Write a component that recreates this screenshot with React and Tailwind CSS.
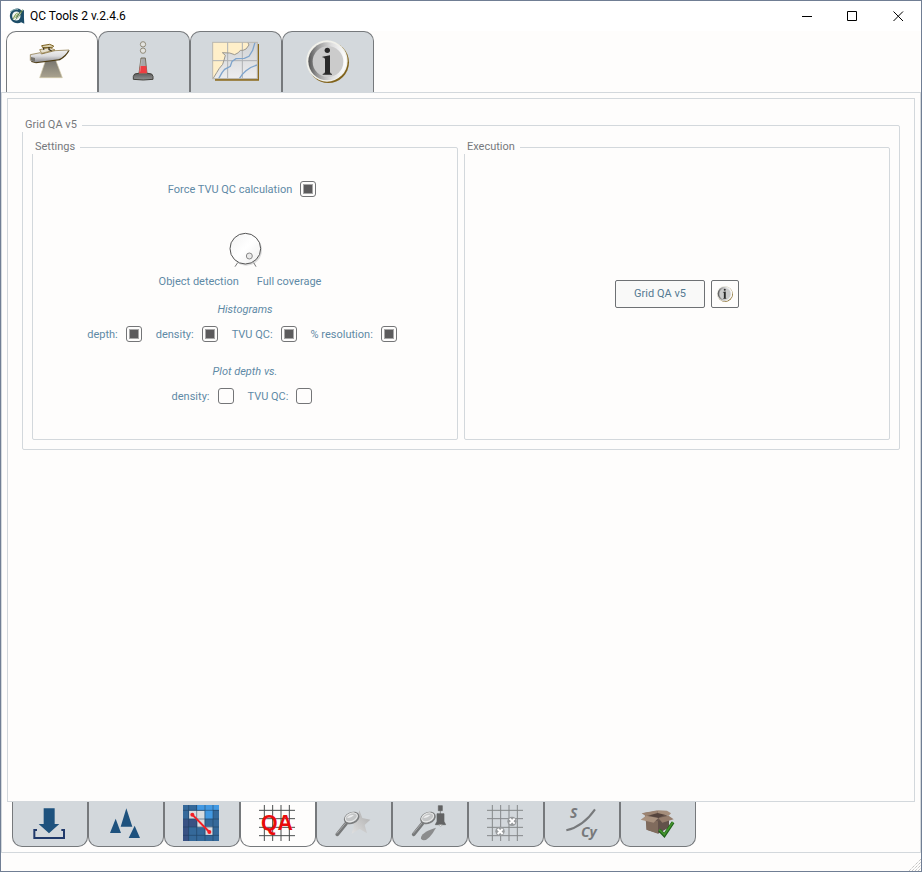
import React from "react";

function LogoIcon() {
  return (
    <svg viewBox="3 1 44 46" className="size-4" aria-hidden="true">
      <path d="M31 3A22 21 0 1 0 37 42L46 46L45 29V6L39 11Q36 5 31 3Z" fill="#1d4d68" />
      <ellipse cx="23" cy="24" rx="12" ry="13" fill="#f5f8f5" />
      <path d="M12 35Q16 19 27 14Q29 27 12 35Z" fill="#7e9b4d" />
      <path d="M20 37Q24 19 42 4Q40 20 20 37Z" fill="#4e7440" />
      <path d="M15 35L25 17M23 35L36 14" stroke="#fff" strokeWidth="2" />
      <path d="M6 12Q16 2 28 5" stroke="#83a9ad" strokeWidth="3" fill="none" />
    </svg>
  );
}

function BoatIcon() {
  return (
    <svg viewBox="84 114 144 144" className="size-12" aria-hidden="true">
      <defs>
        <linearGradient id="beam" x1="0" y1="0" x2="0" y2="1">
          <stop offset="0" stopColor="#77756e" />
          <stop offset="1" stopColor="#aaa38f" />
        </linearGradient>
        <linearGradient id="hull" x1="0" y1="0" x2="0" y2="1">
          <stop offset="0" stopColor="#f2f2f2" />
          <stop offset=".5" stopColor="#dcdcde" />
          <stop offset="1" stopColor="#88888c" />
        </linearGradient>
      </defs>
      <path d="M137 180H167L187 233H119Z" fill="url(#beam)" stroke="#d2c8a8" strokeWidth="2" />
      <path d="M93 167L122 162L209 151Q200 170 180 181L108 190L94 186Z" fill="#4d3c14" />
      <path d="M91 164L121 158L124 162L165 152L206 149Q196 168 176 178L106 187L92 182Z" fill="url(#hull)" />
      <path d="M91 182V164L121 158L124 162L165 152L207 150" stroke="#7d6630" strokeWidth="2" fill="none" />
      <path d="M119 149L149 143L165 150L125 160Z" fill="#e6e0cf" stroke="#7d6221" strokeWidth="2" />
      <path d="M125 137L149 133L161 138L158 142L128 143Z" fill="#dcd3b2" stroke="#7d6221" strokeWidth="3" />
      <path d="M131 143V149M147 141V149L155 153" stroke="#3e361f" strokeWidth="4" fill="none" />
      <path d="M93 171L105 174V185L93 181Z" fill="#77746d" />
    </svg>
  );
}

function BuoyIcon() {
  return (
    <svg viewBox="360 114 144 144" className="size-12" aria-hidden="true">
      <defs>
        <linearGradient id="buoy-base" x1="0" y1="0" x2="0" y2="1">
          <stop offset="0" stopColor="#555" />
          <stop offset="1" stopColor="#929292" />
        </linearGradient>
      </defs>
      <circle cx="429" cy="133" r="8" fill="#e3e3df" stroke="#918c7b" strokeWidth="3" />
      <circle cx="429" cy="152" r="8" fill="#e3e3df" stroke="#918c7b" strokeWidth="3" />
      <path d="M404 222Q429 213 455 222Q461 228 459 238Q430 242 400 238Q398 228 404 222Z" fill="url(#buoy-base)" stroke="#42413c" strokeWidth="3" />
      <path d="M423 174H436L441 220H417Z" fill="#a7a7a9" stroke="#77705f" strokeWidth="3" />
      <path d="M420 198H439L441 220H417Z" fill="#ee3d42" />
      <path d="M424 178L420 215" stroke="#ddd" strokeWidth="2" opacity=".6" />
    </svg>
  );
}

function ChartIcon() {
  return (
    <svg viewBox="66 114 144 144" className="size-12" aria-hidden="true">
      <defs>
        <linearGradient id="sea" x1="0" y1="0" x2="0" y2="1">
          <stop offset="0" stopColor="#d0d2d5" />
          <stop offset="1" stopColor="#ededee" />
        </linearGradient>
      </defs>
      <path d="M75 132H207V242H75Z" fill="#8d6b1c" />
      <path d="M68 126H202V236H68Z" fill="url(#sea)" />
      <path d="M68 126H175L177 135L168 147L159 151L151 151L145 158L134 164L119 159L101 159L99 158L106 166L103 177L98 193L88 205L80 218L69 236Z" fill="#ffefc9" />
      <path d="M113 126V236M157 126V236M68 182H202" stroke="#aeb0b3" strokeWidth="3" />
      <path d="M173 126L177 135L168 147L159 151L151 151L145 158L134 164L119 159L97 158L106 166L103 177L98 193L88 205L80 218L69 236" fill="none" stroke="#9c988e" strokeWidth="3" />
      <path d="M195 127L188 151L177 169L163 175L138 176L126 184L121 199L104 208L96 218L86 236M202 195Q180 201 168 212L157 223L148 236" fill="none" stroke="#7fa4cb" strokeWidth="4" />
      <rect x="68" y="127" width="134" height="109" fill="none" stroke="#b9b7b0" strokeWidth="3" />
    </svg>
  );
}

function InfoIcon({ id, className }) {
  return (
    <svg viewBox="342 114 144 144" className={className} aria-hidden="true">
      <defs>
        <linearGradient id={id} x1="0" y1="0" x2="1" y2="0">
          <stop offset="0" stopColor="#555" />
          <stop offset=".25" stopColor="#999" />
          <stop offset=".6" stopColor="#ddd" />
          <stop offset="1" stopColor="#fff" />
        </linearGradient>
      </defs>
      <circle cx="415" cy="187" r="62" fill="#80621a" />
      <circle cx="411" cy="183" r="62" fill="#f1f1eb" />
      <circle cx="412" cy="184" r="57" fill={`url(#${id})`} />
      <circle cx="414" cy="185" r="46" fill="#cbcbcb" />
      <circle cx="412" cy="151" r="8" fill="#292929" />
      <path d="M397 170L420 166V216Q420 220 426 222V224H398V222Q405 220 405 216V177Q404 172 397 172Z" fill="#292929" />
    </svg>
  );
}

function ImportIcon() {
  return (
    <svg viewBox="93 45 108 108" className="size-9" aria-hidden="true">
      <path d="M131 55H164V102H178L147 130L116 102H131Z" fill="#1e527e" />
      <path d="M111 120H103V144H192V120H184" fill="none" stroke="#20396a" strokeWidth="6" />
    </svg>
  );
}

function SpikesIcon() {
  return (
    <svg viewBox="321 45 108 108" className="size-9" aria-hidden="true">
      <path d="M379 55L397 110H362ZM347 86L363 129H330ZM404 107L420 144H386Z" fill="#1e527e" />
    </svg>
  );
}

function GridPathIcon() {
  return (
    <svg viewBox="549 45 108 108" className="size-9" aria-hidden="true">
      <path d="M549 45H657V153H549Z" fill="#35699a" />
      <path d="M591 45H657V60H639V86H614V60H591Z" fill="#4399e2" />
      <path d="M549 88H590V111H566V153H549Z" fill="#395183" />
      <path d="M567 62H614V110H638V135H616V112H592V86H567Z" fill="#d9dcdf" />
      <path d="M566 45V153M590 45V153M615 45V153M639 45V153M549 61H657M549 87H657M549 111H657M549 136H657" stroke="#1b3957" strokeWidth="2" opacity=".75" />
      <path d="M577 74L628 126" stroke="#f31f25" strokeWidth="6" />
      <circle cx="577" cy="74" r="6" fill="#f31f25" />
      <circle cx="628" cy="126" r="6" fill="#f31f25" />
    </svg>
  );
}

function QAIcon() {
  return (
    <svg viewBox="72 45 108 108" className="size-9 overflow-visible" aria-hidden="true">
      <path d="M88 45V153M113 45V153M138 45V153M163 45V153M72 61H180M72 86H180M72 112H180M72 137H180" stroke="#4a4e4e" strokeWidth="3" />
      <text x="126" y="121" textAnchor="middle" fontFamily="Liberation Sans, sans-serif" fontWeight="bold" fontSize="64" fill="#e90b0b">QA</text>
    </svg>
  );
}

function Magnifier({ x }) {
  return (
    <g transform={`translate(${x} 0)`}>
      <path d="M333 101L307 133" stroke="#77797a" strokeWidth="11" strokeLinecap="round" />
      <path d="M331 100L306 130" stroke="#a7a8a9" strokeWidth="3" strokeLinecap="round" />
      <ellipse cx="350" cy="84" rx="22" ry="15" transform="rotate(-24 350 84)" fill="#c3c5c6" stroke="#7b7d7e" strokeWidth="5" />
      <ellipse cx="349" cy="82" rx="19" ry="12" transform="rotate(-24 349 82)" fill="#c4c6c7" stroke="#e8e9e9" strokeWidth="3" />
      <path d="M336 84Q343 73 357 75Q349 84 336 84Z" fill="#edeeef" />
    </g>
  );
}

function FindStarIcon() {
  return (
    <svg viewBox="300 45 108 108" className="size-9" aria-hidden="true">
      <defs>
        <linearGradient id="star" x1="1" y1="0" x2="0" y2="1">
          <stop offset="0" stopColor="#aaa" />
          <stop offset="1" stopColor="#e4e4e4" />
        </linearGradient>
      </defs>
      <path d="M373 61L382 84L406 89L389 105L396 130L374 117L350 131L357 105L341 92L366 86Z" fill="url(#star)" />
      <Magnifier x={0} />
    </svg>
  );
}

function FindBuoyIcon() {
  return (
    <svg viewBox="528 45 108 108" className="size-9" aria-hidden="true">
      <path d="M558 145Q556 128 603 113Q583 150 566 151Q559 151 558 145Z" fill="#8b8c8d" />
      <Magnifier x={229} />
      <path d="M610 47H622V62H610ZM616 61V72M606 71H627V94L632 104H601L606 94Z" fill="#626364" stroke="#626364" strokeWidth="2" />
      <path d="M611 104Q617 113 622 104" fill="#fff" stroke="#8b8c8d" strokeWidth="2" />
    </svg>
  );
}

function GridMarksIcon() {
  return (
    <svg viewBox="66 45 108 108" className="size-9" aria-hidden="true">
      <path d="M82 45V153M107 45V153M132 45V153M157 45V153M66 61H174M66 86H174M66 112H174M66 137H174" stroke="#85888a" strokeWidth="3" />
      <circle cx="141" cy="94" r="14" fill="#989b9d" />
      <circle cx="105" cy="124" r="14" fill="#989b9d" />
      <path d="M134 86L149 101M149 86L134 101M98 117L113 132M113 117L98 132" stroke="#fff" strokeWidth="6" />
    </svg>
  );
}

function SurveyIcon() {
  return (
    <svg viewBox="294 45 108 108" className="size-9 overflow-visible" aria-hidden="true">
      <path d="M304 121Q355 109 390 58" stroke="#77797b" strokeWidth="6" fill="none" />
      <g fontFamily="Open Sans, sans-serif" fontWeight="bold" fontStyle="italic" fontSize="42" fill="#77797b">
        <text x="315" y="84">S</text>
        <text x="348" y="140">Cy</text>
      </g>
    </svg>
  );
}

function BoxIcon() {
  return (
    <svg viewBox="522 45 108 108" className="size-9" aria-hidden="true">
      <path d="M540 76L578 67L612 78V112L579 130L546 119Z" fill="#6b594f" />
      <path d="M543 86L579 94V131L544 119Z" fill="#806b5d" />
      <path d="M579 94L612 82V112L579 131Z" fill="#62524a" />
      <path d="M532 70L578 63L609 70L580 84Z" fill="#55443d" />
      <path d="M530 70L543 79L578 69V61Z" fill="#9b8371" />
      <path d="M527 89L543 77L580 84L566 98Z" fill="#a9927f" />
      <path d="M580 84L611 77L626 88L592 98Z" fill="#957d6c" />
      <path d="M578 61L606 62L618 70L611 77L578 69Z" fill="#a58e7b" />
      <path d="M583 120L598 136L624 97" fill="none" stroke="#1f611b" strokeWidth="10" />
      <path d="M583 119L598 134L624 96" fill="none" stroke="#43932c" strokeWidth="5" />
    </svg>
  );
}

const topTabs = [
  { name: "Survey products", icon: <BoatIcon />, active: true },
  { name: "Chart features", icon: <BuoyIcon /> },
  { name: "Chart review", icon: <ChartIcon /> },
  { name: "Information", icon: <InfoIcon id="info-large" className="size-12" /> },
];

const bottomTabs = [
  { name: "Data inputs", icon: <ImportIcon /> },
  { name: "Detect fliers", icon: <SpikesIcon /> },
  { name: "Detect holidays", icon: <GridPathIcon /> },
  { name: "Grid QA", icon: <QAIcon />, active: true },
  { name: "Scan designated", icon: <FindStarIcon /> },
  { name: "Scan features", icon: <FindBuoyIcon /> },
  { name: "Valsou checks", icon: <GridMarksIcon /> },
  { name: "SBDARE export", icon: <SurveyIcon /> },
  { name: "Submission checks", icon: <BoxIcon /> },
];

function GroupBox({ title, className, children }) {
  return (
    <fieldset className="min-w-0 rounded-xs border border-[#d3d8dc]">
      <legend className="-ml-px bg-[#fefdfc] pb-0.5 pl-[3px] pr-[5px] leading-[11px] text-[#76797c]">{title}</legend>
      <div className={className}>{children}</div>
    </fieldset>
  );
}

function Check({ label, checked }) {
  return (
    <label className="flex h-4 items-center gap-2 whitespace-nowrap">
      <span className="pt-0.5">{label}</span>
      <input
        type="checkbox"
        defaultChecked={checked}
        className="grid size-4 appearance-none place-content-center rounded-[3px] border border-[#747577] checked:before:size-[10px] checked:before:border checked:before:border-[#a8a8a8] checked:before:bg-[#5c5b5c]"
      />
    </label>
  );
}

function Dial() {
  return (
    <div className="relative mt-[35px] h-9 w-9">
      <svg viewBox="0 0 108 108" className="size-9" aria-hidden="true">
        <defs>
          <linearGradient id="knob" x1="0" y1="0" x2="1" y2="1">
            <stop offset="0" stopColor="#f3f3f3" />
            <stop offset=".5" stopColor="#fff" />
            <stop offset="1" stopColor="#ececec" />
          </linearGradient>
        </defs>
        <circle cx="58" cy="54" r="47" fill="#dcdcdc" />
        <circle cx="55" cy="50" r="46" fill="url(#knob)" stroke="#555" strokeWidth="3" />
        <circle cx="67" cy="72" r="9" fill="#e9e9e9" stroke="#888" strokeWidth="3" />
        <path d="M32 92L24 104M80 92L87 104" stroke="#777" strokeWidth="3" />
      </svg>
      <input type="range" min="0" max="1" defaultValue="1" aria-label="Coverage mode" className="absolute inset-0 size-9 opacity-0" />
    </div>
  );
}

export default function App() {
  return (
    <div className="flex min-h-screen flex-col border border-[#707e94] bg-[#fefdfc] font-[Roboto,sans-serif] text-[11px] text-[#5e8aa6]">
      <header className="flex h-[30px] items-center justify-between bg-white text-black">
        <h1 className="flex items-center gap-[5px] pl-2 text-xs">
          <LogoIcon />
          QC Tools 2 v.2.4.6
        </h1>
        <div className="flex">
          <button aria-label="Minimize" className="flex h-[29px] w-[45px] items-center justify-center pl-0.5">
            <svg className="size-[11px]" viewBox="0 0 11 11" aria-hidden="true"><path d="M0 5.5H10" stroke="currentColor" /></svg>
          </button>
          <button aria-label="Maximize" className="flex h-[29px] w-[45px] items-center justify-center pl-0.5">
            <svg className="size-[11px]" viewBox="0 0 11 11" aria-hidden="true"><path d="M.5 .5H9.5V9.5H.5Z" stroke="currentColor" fill="none" /></svg>
          </button>
          <button aria-label="Close" className="flex h-[29px] w-[47px] items-center justify-center pl-0.5">
            <svg className="size-[11px]" viewBox="0 0 11 11" aria-hidden="true"><path d="M.5 .5L10 10M10 .5L.5 10" stroke="currentColor" /></svg>
          </button>
        </div>
      </header>

      <nav className="flex pl-[5px]" aria-label="Tools">
        {topTabs.map((tab) => (
          <button
            key={tab.name}
            aria-label={tab.name}
            className={`flex h-[61px] w-[92px] items-center justify-center rounded-t-[10px] border border-b-0 border-[#76797c] ${tab.active ? "bg-[#fefdfc]" : "bg-[#d3d8dc]"}`}
          >
            {tab.icon}
          </button>
        ))}
      </nav>

      <main className="flex flex-1 flex-col border border-[#d3d8dc] p-[5px]">
        <section className="flex-1 border border-[#d3d8dc] px-3.5 pt-5">
          <GroupBox title="Grid QA v5" className="grid grid-cols-2 gap-1.5 px-[9px] pb-[9px] pt-[9px]">
            <GroupBox title="Settings" className="flex flex-col items-center pb-[35px] pt-[27px]">
              <div className="pr-1.5"><Check label="Force TVU QC calculation" checked /></div>
              <Dial />
              <div className="mt-1.5 flex gap-[18px] pr-2.5 leading-4">
                <span>Object detection</span>
                <span>Full coverage</span>
              </div>
              <p className="mt-3 italic leading-4">Histograms</p>
              <div className="mt-2 flex gap-3.5 pr-1.5">
                <Check label="depth:" checked />
                <Check label="density:" checked />
                <Check label="TVU QC:" checked />
                <Check label="% resolution:" checked />
              </div>
              <p className="mt-[22px] italic leading-4">Plot depth vs.</p>
              <div className="mt-2 flex gap-3.5 pr-1.5">
                <Check label="density:" />
                <Check label="TVU QC:" />
              </div>
            </GroupBox>
            <GroupBox title="Execution" className="flex h-full items-center justify-center gap-1.5 pb-1.5">
              <button className="h-7 w-[90px] rounded-xs border border-[#6e7174] bg-[#f9f9f8] pt-0.5 text-[#547a92]">Grid QA v5</button>
              <button aria-label="Help" className="flex size-7 items-center justify-center rounded-xs border border-[#6e7174]">
                <InfoIcon id="info-small" className="size-[18px]" />
              </button>
            </GroupBox>
          </GroupBox>
        </section>
        <nav className="flex pl-[5px]" aria-label="Survey steps">
          {bottomTabs.map((tab) => (
            <button
              key={tab.name}
              aria-label={tab.name}
              className={`flex h-[45px] w-[76px] items-start justify-center rounded-b-[10px] border border-t-0 border-[#76797c] pr-0.5 pt-[3px] ${tab.active ? "bg-[#fefdfc]" : "bg-[#d3d8dc]"}`}
            >
              {tab.icon}
            </button>
          ))}
        </nav>
      </main>

      <footer className="flex h-[18px] items-end justify-end">
        <svg className="size-3" viewBox="0 0 12 12" aria-hidden="true">
          <path d="M0 12L12 0M3 12L12 3M6 12L12 6M9 12L12 9" stroke="#aaa" strokeDasharray="1 1" />
        </svg>
      </footer>
    </div>
  );
}
